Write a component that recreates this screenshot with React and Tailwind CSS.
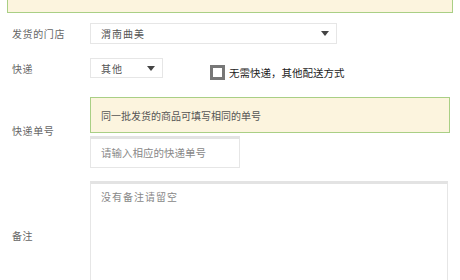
import React from 'react';

const font = { fontFamily: '"Noto Sans CJK SC", "Noto Sans", sans-serif' };

const Caret = () => (
  <svg width="8" height="5" viewBox="0 0 8 5" className="fill-[#444]">
    <path d="M0 0h8L4 5z" />
  </svg>
);

export default function App() {
  return (
    <div className="w-[460px] h-[280px] overflow-hidden bg-white text-[10px] text-[#666]" style={font}>
      {/* top notice bar, cut off */}
      <div className="mx-[7px] -mt-px h-[14px] bg-[#fcf4de] border border-[#a9cf85]"></div>

      <div className="flex items-center mt-[10px] h-[21px]">
        <div className="w-[90px] pl-[12px] tracking-[0.6px]">发货的门店</div>
        <div className="w-[247px] h-[21px] border border-[#e6e6e6] flex items-center justify-between pl-[10px] pr-[7px] text-[#555] tracking-[1px]">
          <span>渭南曲美</span>
          <Caret />
        </div>
      </div>

      <div className="flex items-center mt-[14px] h-[20px]">
        <div className="w-[90px] pl-[12px] tracking-[0.6px]">快递</div>
        <div className="w-[73px] h-[20px] border border-[#e6e6e6] flex items-center justify-between pl-[10px] pr-[7px] text-[#555] tracking-[1px]">
          <span>其他</span>
          <Caret />
        </div>
        <div className="flex items-center ml-[47px] mt-[9px]">
          <div className="w-[15px] h-[15px] border-[3px] border-[#777] bg-white"></div>
          <span className="ml-[4px] text-[10.5px] text-[#222]">无需快递，其他配送方式</span>
        </div>
      </div>

      <div className="flex mt-[19px]">
        <div className="w-[90px] pl-[12px] pt-[26px] tracking-[0.6px]">快递单号</div>
        <div className="flex flex-col">
          <div className="w-[360px] h-[36px] bg-[#fcf4de] border border-[#a9cf85] flex items-center pl-[10px] text-[#555]">
            同一批发货的商品可填写相同的单号
          </div>
          <div className="mt-[3px] w-[150px] h-[32px] border border-[#e6e6e6] border-t-[3px] border-t-[#e3e3e3] flex items-center pl-[10px] text-[#888] text-[10.5px]">
            请输入相应的快递单号
          </div>
        </div>
      </div>

      <div className="flex mt-[13px]">
        <div className="w-[90px] pl-[12px] pt-[47px] tracking-[0.6px]">备注</div>
        <div className="w-[358px] h-[110px] border border-[#e6e6e6] border-t-[3px] border-t-[#e3e3e3] pl-[10px] pt-[5px] text-[#888] tracking-[1px]">
          没有备注请留空
        </div>
      </div>
    </div>
  );
}
